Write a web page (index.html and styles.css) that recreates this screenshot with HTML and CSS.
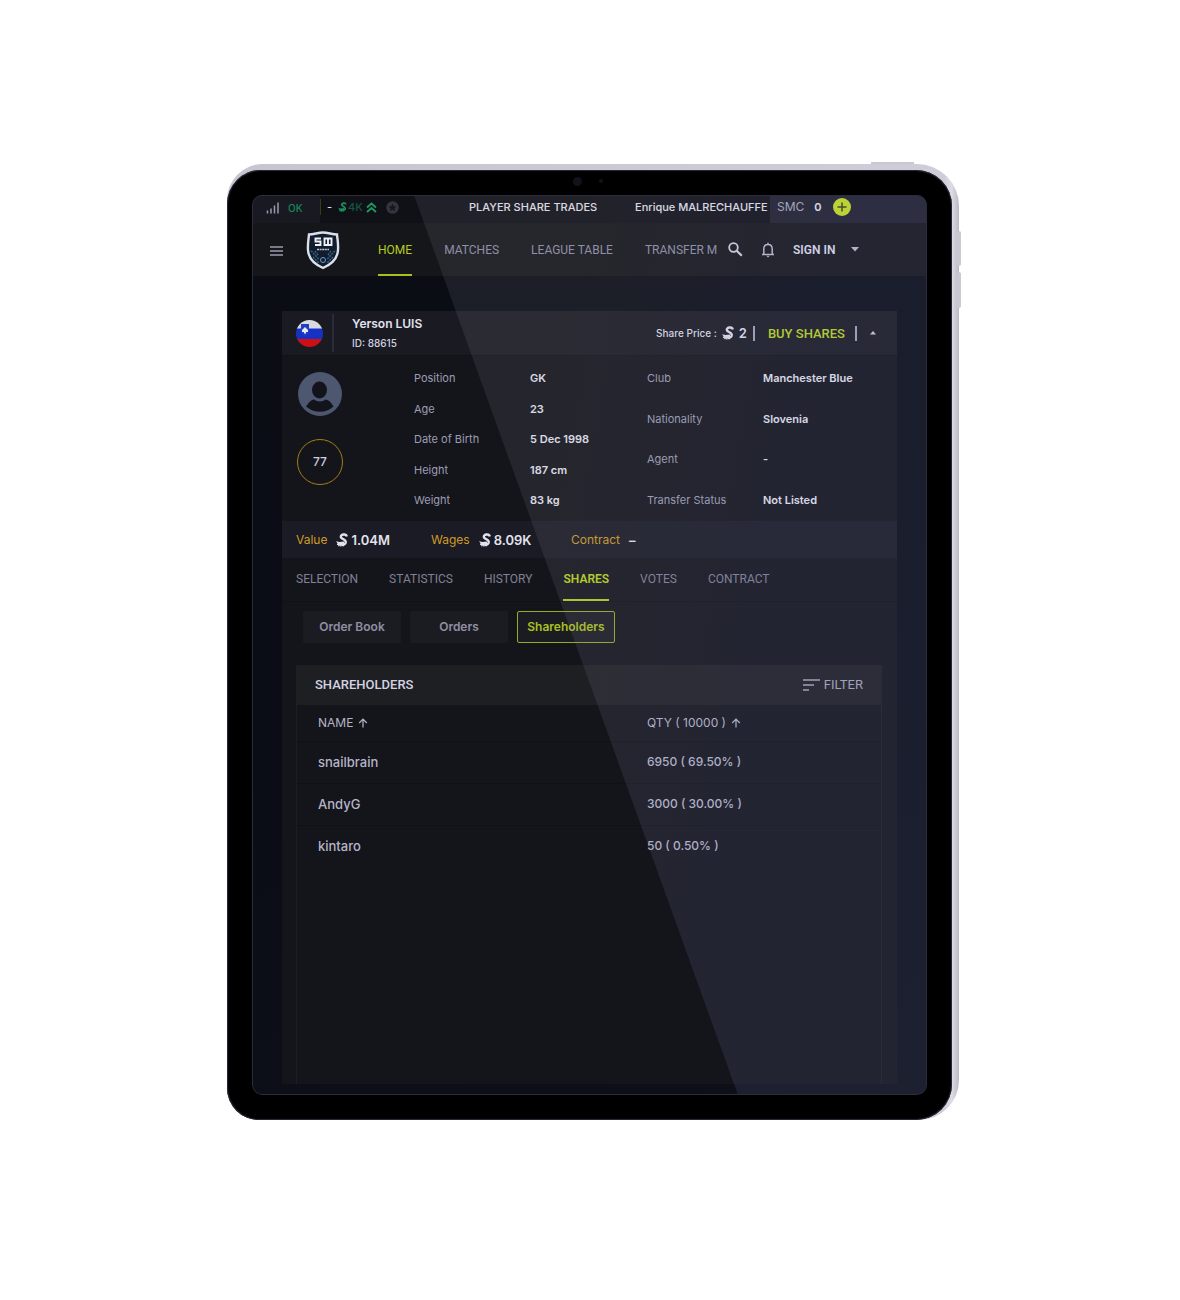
FILE: index.html
```html
<!DOCTYPE html>
<html lang="en">
<head>
<meta charset="utf-8">
<meta name="viewport" content="width=device-width, initial-scale=1">
<title>Yerson LUIS – Shareholders</title>
<link rel="stylesheet" href="styles.css">
</head>
<body>
<svg class="defs" aria-hidden="true">
  <symbol id="coin" viewBox="0 0 12 14">
    <path d="M10.800 3.400C10.400 1.700 8.700 1.300 7.300 1.500C5.300 1.800 4.300 3.300 5.200 4.700C6.100 6 9.300 6.300 9.700 8.500C10 10.800 8 12 6 11.800" fill="none" stroke="currentColor" stroke-width="2.400"/>
    <path d="M0 8.200L3.500 9L8 8.500V13.300H6.200V12.600H5.600V13.500H4.200V12.600H3.600V13.200H2.200V12H.8L1.500 10.300Z" fill="currentColor"/>
  </symbol>
  <symbol id="up" viewBox="0 0 10 10">
    <path d="M5 9.500V1.500M1.200 5L5 1.200L8.800 5" fill="none" stroke="currentColor" stroke-width="1.200"/>
  </symbol>
</svg>
<div class="device">
  <div class="bezel">
    <div class="screen">
      <div class="status">
        <div class="network">
          <svg width="14" height="12" viewBox="0 0 14 12" aria-hidden="true"><path d="M1.500 8.500V11.500M5 6.500V11.500M8.500 3.500V11.500M12 .5V11.500" stroke="#9a9ab0" stroke-width="1.500"/></svg>
          <span class="ok">OK</span>
        </div>
        <div class="ticker">
          <span class="trade">
            <span class="dash">-</span>
            <span class="gain"><svg width="9" height="10"><use href="#coin"/></svg><span class="dim">4K</span></span>
            <svg class="gain-arrow" width="11" height="11" viewBox="0 0 11 11" aria-hidden="true"><path d="M1 5.500L5.500 1.500L10 5.500M1 10L5.500 6L10 10" fill="none" stroke="#1c9a64" stroke-width="1.800"/></svg>
            <svg width="13" height="13" viewBox="0 0 13 13" aria-hidden="true"><circle cx="6.500" cy="6.500" r="6.300" fill="#34343f"/><path d="M6.500 2.600L7.600 5.200L10.400 5.400L8.300 7.200L9 10L6.500 8.500L4 10L4.700 7.200L2.600 5.400L5.400 5.200Z" fill="#15161c"/></svg>
          </span>
          <span class="ticker-title">PLAYER SHARE TRADES</span>
          <span class="ticker-name">Enrique MALRECHAUFFE</span>
        </div>
        <div class="balance">
          <span>SMC</span><b>0</b>
          <button class="add" aria-label="Add funds"><svg width="18" height="18" viewBox="0 0 18 18"><circle cx="9" cy="9" r="9" fill="#c4dc20"/><path d="M9 4.500V13.500M4.500 9H13.500" stroke="#3c4418" stroke-width="1.500"/></svg></button>
        </div>
      </div>

      <header class="topbar">
        <button class="menu" aria-label="Menu"><svg width="13" height="10" viewBox="0 0 13 10"><path d="M0 1H13M0 5H13M0 9H13" stroke="#9a9ab0" stroke-width="1.400"/></svg></button>
        <a class="logo" href="#" aria-label="SM Elite">
          <svg width="34" height="40" viewBox="0 0 34 40">
            <path d="M3 4.500C8 4.500 12 2.500 17 2.500S26 4.500 31 4.500C31.500 10 32.500 14 32 20C31.500 29 25 34.500 17 38C9 34.500 2.500 29 2 20C1.500 14 2.500 10 3 4.500Z" fill="#111c2c" stroke="#dcdfec" stroke-width="2.400"/>
            <path d="M5 21C8 23 10 27 13 29M29 21C26 23 24 27 21 29M7 27L13 33M27 27L21 33M9 21L12 25M25 21L22 25" stroke="#35618a" stroke-width="1.500" fill="none" stroke-dasharray="2 1"/>
            <circle cx="17" cy="30" r="2.500" fill="none" stroke="#6f9cc5"/>
            <path d="M15 8.500H9.500V11.500H14.500V15H9M18.500 16V8.500H25.500V16M22 8.500V15M18.500 15H25.500" fill="none" stroke="#eef0fa" stroke-width="1.900"/>
            <path d="M11 19.500H23" stroke="#b9c4d8" stroke-width="1.700" stroke-dasharray="2 .6"/>
          </svg>
        </a>
        <nav class="nav" aria-label="Main">
          <a class="active" href="#">HOME</a><a href="#">MATCHES</a><a href="#">LEAGUE TABLE</a><a href="#">TRANSFER M</a>
        </nav>
        <div class="tools">
          <button aria-label="Search"><svg width="15" height="15" viewBox="0 0 15 15"><circle cx="5.500" cy="5.500" r="4.300" fill="none" stroke="#d0d0e0" stroke-width="1.800"/><path d="M8.700 8.700L13.800 13.800" stroke="#d0d0e0" stroke-width="2.200"/></svg></button>
          <button aria-label="Notifications"><svg width="14" height="16" viewBox="0 0 14 16"><path d="M1 12.500H13M2.800 12V7C2.800 4.300 4.500 2.500 7 2.500S11.200 4.300 11.200 7V12M7 .8V2.500" fill="none" stroke="#b9b9cc" stroke-width="1.500"/><path d="M5.300 13.800H8.700L7 15.500Z" fill="#b9b9cc"/></svg></button>
          <button class="signin">SIGN IN<svg width="8" height="5" viewBox="0 0 8 5"><path d="M0 0H8L4 4.500Z" fill="#b9b9cc"/></svg></button>
        </div>
      </header>

      <main class="content">
        <article class="card">
          <div class="card-head">
            <svg class="flag" width="27" height="27" viewBox="0 0 27 27" role="img" aria-label="Slovenia">
              <clipPath id="round"><circle cx="13.500" cy="13.500" r="13.500"/></clipPath>
              <g clip-path="url(#round)"><path d="M0 0H27V9H0Z" fill="#d9d9e2"/><path d="M0 8.500H27V19H0Z" fill="#1632c4"/><path d="M0 19H27V27H0Z" fill="#cf0f16"/><path d="M5 4H13V11C13 14 9 16 9 16S5 14 5 11Z" fill="#1d3fc0"/><path d="M6 10L9 7L12 10V12H10V13.500H8V12H6Z" fill="#e8e8f4"/></g>
            </svg>
            <div class="identity"><h1>Yerson LUIS</h1><p>ID: 88615</p></div>
            <div class="price"><span>Share Price :</span><svg width="12" height="14"><use href="#coin"/></svg><b>2</b></div>
            <button class="buy">BUY SHARES</button>
            <button class="collapse" aria-label="Collapse"><svg width="6" height="4" viewBox="0 0 6 4"><path d="M0 3.500L3 0L6 3.500Z" fill="#c8c8d8"/></svg></button>
          </div>

          <div class="info">
            <div class="badges">
              <svg width="46" height="46" viewBox="0 0 46 46" role="img" aria-label="Player"><circle cx="23" cy="23" r="22" fill="#4d5770"/><ellipse cx="22.500" cy="19" rx="7.500" ry="8.500" fill="#13141b"/><path d="M9 35.500C12 31 15 28.500 17 28.500C20 31 26 31 28.500 28.500C31 28.500 34 31 36.500 35.500C29 42.500 17 42.500 9 35.500Z" fill="#13141b"/></svg>
              <span class="rating">77</span>
            </div>
            <dl class="facts">
              <dt>Position</dt><dd>GK</dd>
              <dt>Age</dt><dd>23</dd>
              <dt>Date of Birth</dt><dd>5 Dec 1998</dd>
              <dt>Height</dt><dd>187 cm</dd>
              <dt>Weight</dt><dd>83 kg</dd>
            </dl>
            <dl class="facts">
              <dt>Club</dt><dd>Manchester Blue</dd>
              <dt>Nationality</dt><dd>Slovenia</dd>
              <dt>Agent</dt><dd>-</dd>
              <dt>Transfer Status</dt><dd>Not Listed</dd>
            </dl>
          </div>

          <div class="values">
            <div><span>Value</span><b><svg width="12" height="14"><use href="#coin"/></svg>1.04M</b></div>
            <div><span>Wages</span><b><svg width="12" height="14"><use href="#coin"/></svg>8.09K</b></div>
            <div><span>Contract</span><b>–</b></div>
          </div>

          <nav class="tabs" aria-label="Player">
            <a href="#">SELECTION</a><a href="#">STATISTICS</a><a href="#">HISTORY</a><a class="active" href="#">SHARES</a><a href="#">VOTES</a><a href="#">CONTRACT</a>
          </nav>
          <div class="views">
            <button>Order Book</button><button>Orders</button><button class="active">Shareholders</button>
          </div>

          <section class="panel">
            <div class="panel-head">
              <h2>SHAREHOLDERS</h2>
              <button class="filter"><svg width="17" height="12" viewBox="0 0 17 12" aria-hidden="true"><path d="M0 1H17M0 6H11M0 11H6" stroke="#a4a4b8" stroke-width="1.600"/></svg>FILTER</button>
            </div>
            <table>
              <thead><tr><th scope="col"><button>NAME<svg width="10" height="10"><use href="#up"/></svg></button></th><th scope="col"><button>QTY ( 10000 )<svg width="10" height="10"><use href="#up"/></svg></button></th></tr></thead>
              <tbody>
                <tr><td>snailbrain</td><td>6950 ( 69.50% )</td></tr>
                <tr><td>AndyG</td><td>3000 ( 30.00% )</td></tr>
                <tr><td>kintaro</td><td>50 ( 0.50% )</td></tr>
              </tbody>
            </table>
          </section>
        </article>
      </main>
      <div class="glare"></div>
    </div>
  </div>
  <i class="key key-top"></i><i class="key key-up"></i><i class="key key-down"></i>
</div>
</body>
</html>
```
FILE: styles.css
```css
* { box-sizing: border-box; }
body {
  margin: 0;
  padding: 164px 0 180px 6px;
  background: #fff;
  color: #cfcfe0;
  font: 400 11px/16px Inter, "Liberation Sans", sans-serif;
}
h1, h2, p, dl, dd { margin: 0; }
a { color: inherit; text-decoration: none; }
button {
  padding: 0;
  border: 0;
  background: none;
  color: inherit;
  font: inherit;
  cursor: pointer;
}
svg { display: block; flex: none; }
.defs { position: absolute; width: 0; height: 0; }

/* Tablet */
.device {
  position: relative;
  max-width: 732px;
  margin: 0 auto;
  padding: 6px 7px 0 0;
  border-radius: 36px 42px 40px 32px;
  background: linear-gradient(90deg, #c6c5d0, #cfced8 98%, #dddce4 99%, #b9b8c6);
}
.bezel {
  padding: 25px 25px 25px 25px;
  border-radius: 34px 36px 36px 32px;
  background: #000;
  box-shadow: 0 0 1px 1px #2c2b3a inset;
}
.bezel::before, .bezel::after {
  content: "";
  position: absolute;
  top: 13px;
  left: 346px;
  width: 9px;
  height: 9px;
  border-radius: 50%;
  background: #12121d;
}
.bezel::after { top: 15px; left: 372px; width: 4px; height: 4px; }
.key { position: absolute; background: #c9c8d3; }
.key-top { top: -2px; right: 45px; width: 43px; height: 2px; }
.key-up { top: 67px; right: -2px; width: 4px; height: 35px; border-radius: 2px; }
.key-down { top: 108px; right: -2px; width: 4px; height: 36px; border-radius: 2px; }
.screen {
  position: relative;
  overflow: hidden;
  border-radius: 10px;
  background: linear-gradient(160deg, #0b0d14, #0a0d16 50%, #0d1019);
}
.glare {
  position: absolute;
  inset: 0;
  pointer-events: none;
  border-radius: 10px;
  background: linear-gradient(100deg, rgba(150, 150, 165, .13) 40%, rgba(135, 140, 200, .13) 70%);
  clip-path: polygon(24% 0, 100% 0, 100% 100%, 72% 100%);
}
.screen::after {
  content: "";
  position: absolute;
  inset: 0;
  pointer-events: none;
  border: 1px solid #2c2c3e;
  border-radius: 10px;
}

/* Status strip */
.status { display: flex; height: 28px; background: #101117; }
.network {
  display: flex;
  align-items: center;
  gap: 8px;
  width: 68px;
  padding: 0 0 2px 14px;
  background: #191922;
}
.ok { color: #16875a; font-size: 10px; font-weight: 500; }
.ticker {
  display: flex;
  align-items: center;
  flex: 1;
  min-width: 0;
  padding-bottom: 4px;
  overflow: hidden;
  color: #e2e2ee;
  font-weight: 500;
  white-space: nowrap;
}
.trade { display: flex; align-items: center; width: 149px; padding-left: 6px; border-left: 1px solid #3a3a14; }
.dash { width: 11px; }
.gain { display: flex; align-items: center; gap: 1px; width: 28px; color: #1a8f5e; }
.dim { color: #155540; }
.gain-arrow { margin-right: 9px; }
.ticker-title { width: 166px; }
.balance {
  display: flex;
  align-items: center;
  gap: 10px;
  width: 157px;
  padding: 0 0 5px 7px;
  background: #20202d;
  color: #a9a9bd;
  font-size: 12px;
}
.balance b { width: 9px; color: #e2e2ee; font-size: 11px; font-weight: 600; }

/* Top bar */
.topbar { display: flex; align-items: stretch; height: 53px; background: #15161a; }
.menu { width: 50px; padding: 2px 0 0 18px; }
.logo { display: flex; align-items: center; width: 76px; padding: 0 0 0 4px; }
.nav {
  display: flex;
  flex: 1;
  gap: 32px;
  min-width: 0;
  overflow: hidden;
  color: #8f8fa6;
  font: 400 12px/54px Roboto, sans-serif;
  white-space: nowrap;
}
.nav .active { border-bottom: 2px solid #a9bf20; color: #b4cc1f; }
.tools { display: flex; align-items: center; gap: 18px; width: 208px; padding-left: 9px; }
.signin { display: flex; align-items: center; gap: 16px; color: #dadaea; font: 600 12px/16px Roboto, sans-serif; }

/* Player card */
.content { padding: 35px 30px 11px 30px; }
.card { background: #14151b; }
.card-head {
  display: flex;
  align-items: center;
  height: 45px;
  padding: 0 16px 0 14px;
  border-bottom: 1px solid #111218;
  background: #1a1b22;
}
.identity {
  flex: 1;
  margin-left: 9px;
  padding-left: 18px;
  border-left: 2px solid #2a2a38;
}
h1 { font-size: 12px; font-weight: 600; line-height: 20px; color: #e2e2ee; }
.identity p { font-size: 10px; font-weight: 500; line-height: 18px; }
.price { display: flex; align-items: center; gap: 5px; font-size: 10px; font-weight: 500; color: #dcdcea; }
.price b { font-size: 13px; font-weight: 600; }
.buy {
  margin: 0 8px 0 6px;
  padding: 0 10px 0 13px;
  border: solid #a0a0b8;
  border-width: 0 2px;
  color: #b9d21f;
  font: 500 13px/15px Roboto, sans-serif;
}
.collapse { display: grid; place-items: center; width: 16px; height: 16px; border-radius: 50%; background: #1c1c20; }
.info { display: grid; grid-template-columns: 132px 233px 1fr; height: 165px; }
.badges { display: grid; align-content: start; gap: 22px; padding: 15px 0 0 15px; }
.rating {
  display: grid;
  place-items: center;
  width: 46px;
  height: 46px;
  border: 1px solid #a67c1e;
  border-radius: 50%;
  font-size: 12px;
  font-weight: 500;
}
.facts { display: grid; grid-template-columns: 116px 1fr; align-content: space-between; padding: 14px 0 13px; }
.facts dt { color: #9d9db3; }
.facts dd { color: #e2e2ee; font-size: 11px; font-weight: 600; }
.values { display: flex; height: 37px; padding-left: 14px; background: #1a1b24; }
.values div { display: flex; align-items: center; gap: 9px; }
.values div:nth-child(1) { width: 135px; }
.values div:nth-child(2) { width: 140px; }
.values span { color: #cf9a25; font-size: 12px; }
.values b { display: flex; align-items: center; gap: 3px; color: #e2e2ee; font-size: 13px; font-weight: 600; }

.tabs {
  display: flex;
  gap: 31px;
  height: 44px;
  padding-left: 14px;
  border-bottom: 1px solid #101116;
  color: #808096;
  font: 400 12px/42px Roboto, sans-serif;
}
.tabs .active { border-bottom: 2px solid #b4cc1f; color: #b9d21f; font-weight: 600; }
.views { display: flex; gap: 9px; padding: 9px 21px 22px; }
.views button {
  width: 98px;
  height: 32px;
  border-radius: 2px;
  background: #1b1c22;
  color: #8f8fa4;
  font-size: 12px;
  font-weight: 600;
}
.views .active { border: 1px solid #96ab26; color: #a9c120; }

/* Shareholders */
.panel { min-height: 419px; margin: 0 15px 0 14px; border: solid #1d1e24; border-width: 0 1px; }
.panel-head {
  display: flex;
  align-items: center;
  justify-content: space-between;
  height: 40px;
  padding: 0 18px;
  background: #1e1f23;
}
h2 { color: #d3d3e4; font: 500 13px/16px Roboto, sans-serif; }
.filter { display: flex; align-items: center; gap: 4px; color: #a4a4b8; font: 400 13px/16px Roboto, sans-serif; }
table { width: 100%; border-collapse: collapse; table-layout: fixed; }
th, td { padding: 0 0 0 21px; border-bottom: 1px solid #101116; text-align: left; }
th:first-child { width: 350px; }
th:last-child, td:last-child { padding-left: 0; }
th { height: 36px; font-weight: 400; }
th button { display: flex; align-items: center; gap: 5px; color: #b4b4c8; font-size: 12px; }
td { height: 42px; color: #b4b4c8; font-size: 13px; font-weight: 500; }
td:last-child { font-size: 12px; }
tbody tr:last-child td { border-bottom: 0; }
```
